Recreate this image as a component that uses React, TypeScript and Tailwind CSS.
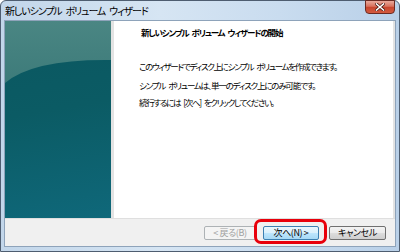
import React from "react";

const jp = "font-['Noto_Sans_CJK_JP','Noto_Sans',sans-serif] [font-feature-settings:'palt']";
const sp = "\u2002";

function Btn({ label, disabled, primary }: { label: string; disabled?: boolean; primary?: boolean }) {
  return (
    <div
      className={`flex h-[14px] items-center justify-center rounded-[2px] border text-[9px] leading-none tracking-[-0.4px] ${jp} ${
        disabled
          ? "border-[#adb2b5] bg-[#f4f4f4] text-[#a0a0a0]"
          : primary
          ? "border-[#3c7fb1] bg-[linear-gradient(#eaf6fd,#d9f0fc_50%,#bee6fd_50%,#a7d9f5)] text-black"
          : "border-[#707070] bg-[linear-gradient(#f2f2f2,#ebebeb_50%,#dddddd_50%,#cfcfcf)] text-black"
      }`}
    >
      {label}
    </div>
  );
}

export default function App() {
  return (
    <div className="relative h-[252px] w-[400px] overflow-hidden bg-white">
      <div className="flex h-[252px] w-[400px] flex-col rounded-t-[6px] border border-[#4e5d70] bg-[linear-gradient(90deg,#c2d6ea,#d6e5f3_40%,#c9dcef_70%,#b9d0e8)]">
        {/* title bar */}
        <div className="relative flex h-[19px] shrink-0 items-center pl-[4px]">
          <span className={`text-[10px] leading-none tracking-[-1.1px] text-black ${jp}`}>{`新しいシンプル${sp}ボリューム${sp}ウィザード`}</span>
          <div className="absolute right-[4px] top-[-1px] flex h-[14px] w-[30px] items-center justify-center rounded-b-[4px] border border-[#6b2a22] bg-[linear-gradient(#e9a99c,#d8705c_45%,#c7442d_50%,#d35b3f)]">
            <svg width="10" height="8" viewBox="0 0 10 8">
              <path d="M1.5 1 L8.5 7 M8.5 1 L1.5 7" stroke="#4a1a14" strokeWidth="3" strokeLinecap="square" />
              <path d="M1.5 1 L8.5 7 M8.5 1 L1.5 7" stroke="#ffffff" strokeWidth="1.6" strokeLinecap="square" />
            </svg>
          </div>
        </div>
        {/* client */}
        <div className="mx-[3px] flex h-[227px] flex-col border border-[#8ea3ba] bg-[#f0f0f0]">
          <div className="flex h-[197px] shrink-0 bg-white">
            <div className="relative w-[106px] overflow-hidden bg-[linear-gradient(170deg,#0b5760,#0b5b64_45%,#0f687a)]">
              <svg className="absolute left-0 top-0" width="106" height="70" viewBox="0 0 106 70">
                <defs>
                  <linearGradient id="lt" x1="0" y1="0" x2="0" y2="1">
                    <stop offset="0" stopColor="#4a8683" />
                    <stop offset="1" stopColor="#3d7b7a" />
                  </linearGradient>
                </defs>
                <path d="M0 0 H106 V39 Q 28 38 0 62 Z" fill="url(#lt)" />
              </svg>
            </div>
            <div className="w-[3px] bg-[#e3e3e3]" />
            <div className="flex-1 pl-[25px] pt-[5px]">
              <div className={`ml-[2px] text-[8.5px] font-bold leading-[12px] tracking-[-1.2px] text-black ${jp}`}>{`新しいシンプル${sp}ボリューム${sp}ウィザードの開始`}</div>
              <div className={`mt-[23px] text-[8.5px] leading-[11px] tracking-[-1.3px] text-black ${jp}`}>{`このウィザードでディスク上にシンプル${sp}ボリュームを作成できます。`}</div>
              <div className={`mt-[8px] text-[8.5px] leading-[11px] tracking-[-1.2px] text-black ${jp}`}>{`シンプル${sp}ボリュームは、単一のディスク上にのみ可能です。`}</div>
              <div className={`mt-[6px] text-[8.5px] leading-[11px] tracking-[-1.3px] text-black ${jp}`}>{`続行するには${sp}[次へ]${sp}をクリックしてください。`}</div>
            </div>
            <div className="w-[2px] bg-[#e3e3e3]" />
          </div>
          <div className="flex flex-1 items-center justify-end border-t border-[#dfdfdf] pr-[9px]">
            <div className="flex items-center">
              <div className="w-[52px]"><Btn label="< 戻る(B)" disabled /></div>
              <div className="relative ml-[7px] w-[56px]">
                <Btn label="次へ(N) >" primary />
                <div className="absolute -left-[9px] -top-[7px] h-[25px] w-[73px] rounded-[7px] border-[3px] border-[#e8000b]" />
              </div>
              <div className="ml-[10px] w-[57px]"><Btn label="キャンセル" /></div>
            </div>
          </div>
        </div>
      </div>
    </div>
  );
}
